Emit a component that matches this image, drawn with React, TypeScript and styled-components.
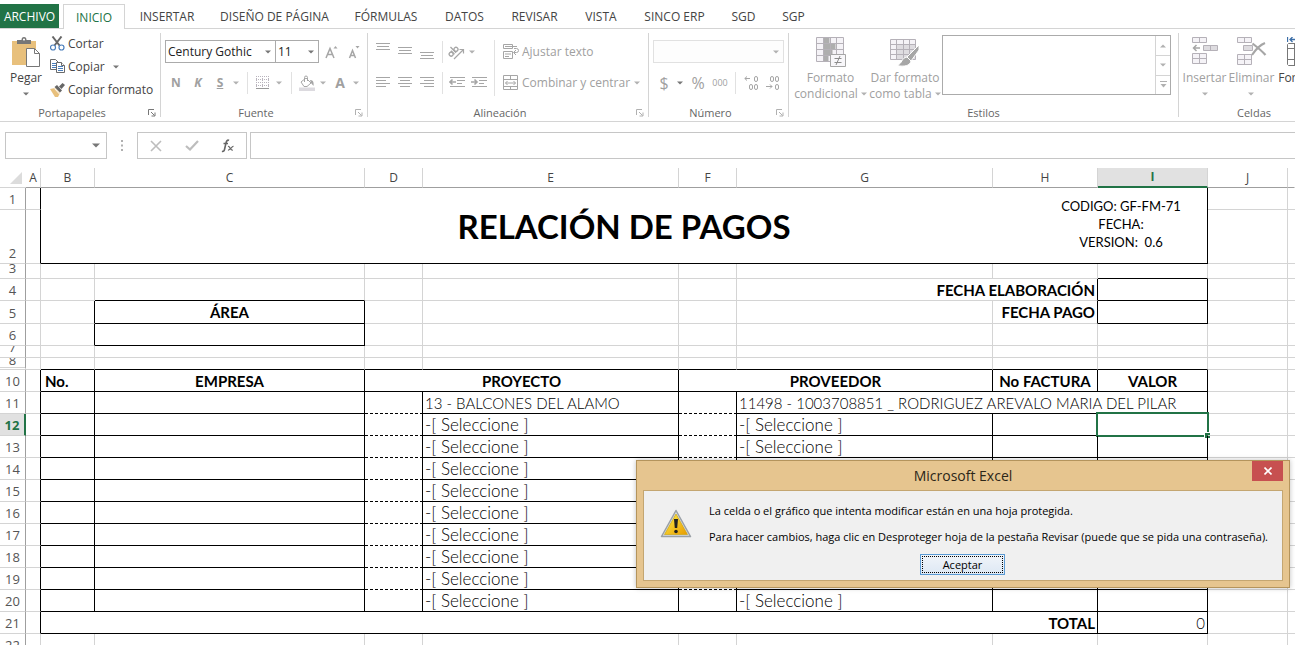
import React from "react";
import styled, { createGlobalStyle, css } from "styled-components";

const UI = `"Open Sans", "Noto Sans", sans-serif`;
const SHEET = `Lato, "Open Sans", sans-serif`;
const GREEN = "#217346";
const GRID = "#d4d4d4";

const GlobalStyle = createGlobalStyle`
  *, *::before, *::after { box-sizing: border-box; }
  html, body, #root { height: 100%; }
  body { margin: 0; background: #fff; overflow: hidden; font-family: ${UI}; font-size: 12px; color: #444; }
  button, input, select { font: inherit; color: inherit; margin: 0; padding: 0; border: 0; background: none; border-radius: 0; }
  svg { display: block; flex: none; }
`;

const AppWindow = styled.div`
  position: relative;
  display: flex;
  flex-direction: column;
  height: 100%;
  overflow: hidden;
`;

/* ---------- Tabs ---------- */

const Tabs = styled.nav`
  display: flex;
  align-items: flex-end;
  height: 29px;
  padding-top: 4px;
  border-bottom: 1px solid ${GRID};
  flex: none;
`;

const Tab = styled.button<{ $w: number; $kind?: "file" | "active" }>`
  width: ${(p) => p.$w}px;
  height: 24px;
  flex: none;
  white-space: nowrap;
  text-align: center;
  ${(p) =>
    p.$kind === "file" &&
    css`
      background: ${GREEN};
      color: #fff;
      margin-right: 4px;
    `}
  ${(p) =>
    p.$kind === "active" &&
    css`
      height: 25px;
      margin-bottom: -1px;
      border: 1px solid ${GRID};
      border-bottom: 0;
      background: #fff;
      color: ${GREEN};
    `}
`;

/* ---------- Ribbon ---------- */

const Ribbon = styled.div`
  display: flex;
  height: 93px;
  border-bottom: 1px solid ${GRID};
  flex: none;
`;

const Group = styled.section<{ $w: number }>`
  width: ${(p) => p.$w}px;
  flex: none;
  display: flex;
  flex-direction: column;
  justify-content: space-between;
`;

const GroupLine = styled.div`
  width: 1px;
  margin: 4px 0;
  background: ${GRID};
  flex: none;
`;

const GroupFooter = styled.div`
  display: flex;
  align-items: center;
  height: 17px;
  line-height: 17px;
  font-size: 11px;
  color: #666;
`;

const GroupLabel = styled.span`
  flex: 1;
  text-align: center;
`;

const Launcher = styled.button<{ $dim?: boolean }>`
  width: 16px;
  padding-left: 4px;
  color: ${(p) => (p.$dim ? "#b1b1b1" : "#777")};
`;

const Tools = styled.div`
  display: flex;
  flex-direction: column;
  gap: 8px;
  padding: 11px 4px 0;
`;

const SplitTools = styled.div`
  display: flex;
`;

const ToolRow = styled.div`
  display: flex;
  align-items: center;
  height: 23px;
`;

const ToolButton = styled.button<{ $w: number }>`
  width: ${(p) => p.$w}px;
  height: 22px;
  display: flex;
  align-items: center;
  justify-content: center;
  flex: none;
  color: #a0a0a0;
`;

const Glyph = styled.span<{ $size?: number; $bold?: boolean; $italic?: boolean; $under?: boolean }>`
  font-size: ${(p) => p.$size ?? 12}px;
  line-height: 20px;
  font-weight: ${(p) => (p.$bold ? 700 : 400)};
  font-style: ${(p) => (p.$italic ? "italic" : "normal")};
  text-decoration: ${(p) => (p.$under ? "underline" : "none")};
`;

const Divider = styled.div<{ $w?: number; $tall?: boolean }>`
  width: ${(p) => p.$w ?? 12}px;
  height: ${(p) => (p.$tall ? 56 : 22)}px;
  display: flex;
  justify-content: center;
  flex: none;
  &::before {
    content: "";
    width: 1px;
    background: #e1e1e1;
  }
`;

const TextTool = styled.button<{ $dim?: boolean }>`
  display: flex;
  align-items: center;
  gap: 3px;
  height: 23px;
  white-space: nowrap;
  color: ${(p) => (p.$dim ? "#a0a0a0" : "#444")};
`;

const ToolColumn = styled.div<{ $gap?: number; $left?: number }>`
  display: flex;
  flex-direction: column;
  gap: ${(p) => p.$gap ?? 0}px;
  padding-left: ${(p) => p.$left ?? 0}px;
`;

const BigTools = styled.div<{ $top?: number; $left?: number }>`
  display: flex;
  align-items: flex-start;
  padding: ${(p) => p.$top ?? 8}px 0 0 ${(p) => p.$left ?? 0}px;
`;

const BigTool = styled.button<{ $w: number; $dim?: boolean }>`
  width: ${(p) => p.$w}px;
  flex: none;
  display: flex;
  flex-direction: column;
  align-items: center;
  gap: 3px;
  line-height: 16px;
  white-space: nowrap;
  color: ${(p) => (p.$dim ? "#a0a0a0" : "#444")};
`;

const BigLine = styled.span`
  display: flex;
  align-items: center;
  justify-content: center;
  gap: 3px;
  min-height: 16px;
`;

const Stack = styled.span`
  display: block;
`;

const SelectWrap = styled.label<{ $w: number; $dim?: boolean }>`
  width: ${(p) => p.$w}px;
  height: 23px;
  display: grid;
  grid-template-columns: 1fr 14px;
  align-items: center;
  flex: none;
  border: 1px solid ${(p) => (p.$dim ? "#e1e1e1" : "#ababab")};
  background: ${(p) => (p.$dim ? "#fdfdfd" : "#fff")};
  color: #777;
  & + & { margin-left: -1px; }
  select {
    grid-area: 1 / 1 / 2 / 3;
    width: 100%;
    height: 21px;
    padding-left: 2px;
    appearance: none;
    color: #222;
    opacity: 1;
  }
  svg { grid-area: 1 / 2; justify-self: center; pointer-events: none; }
`;

const Gallery = styled.div`
  display: grid;
  grid-template-columns: 1fr 15px;
  width: 229px;
  height: 60px;
  margin-top: -2px;
  border: 1px solid #ababab;
`;

const GalleryScroll = styled.div`
  display: grid;
  grid-template-rows: repeat(3, 1fr);
  border-left: 1px solid ${GRID};
  color: #b1b1b1;
  button {
    display: flex;
    align-items: center;
    justify-content: center;
  }
  button + button { border-top: 1px solid ${GRID}; }
`;

/* ---------- Formula bar ---------- */

const FormulaBar = styled.div`
  display: flex;
  height: 46px;
  padding: 10px 0 9px 5px;
  flex: none;
`;

const BarBox = styled.div<{ $w?: number }>`
  display: flex;
  align-items: center;
  border: 1px solid #c6c6c6;
  ${(p) => (p.$w ? `width: ${p.$w}px; flex: none;` : "flex: 1; border-right: 0;")}
  input { flex: 1; min-width: 0; height: 100%; padding: 0 4px; outline: 0; }
`;

const BarButton = styled.button<{ $w: number }>`
  width: ${(p) => p.$w}px;
  height: 100%;
  display: flex;
  align-items: center;
  justify-content: center;
  color: #777;
`;

const BarGap = styled.div<{ $w: number }>`
  width: ${(p) => p.$w}px;
  display: flex;
  align-items: center;
  justify-content: center;
  flex: none;
`;

/* ---------- Sheet ---------- */

const Sheet = styled.table`
  width: 100%;
  min-width: 1288px;
  table-layout: fixed;
  border-collapse: separate;
  border-spacing: 0;
  th, td { padding: 0; }
`;

const ColHead = styled.th<{ $on?: boolean; $plain?: boolean }>`
  height: 20px;
  font-weight: ${(p) => (p.$on ? 700 : 400)};
  font-size: 12px;
  line-height: 18px;
  color: ${(p) => (p.$on ? GREEN : "#444")};
  background: ${(p) => (p.$on ? "#e1e1e1" : "#fff")};
  border-right: 1px solid ${(p) => (p.$plain ? "transparent" : GRID)};
  border-bottom: ${(p) => (p.$on ? `2px solid ${GREEN}` : "1px solid #9f9f9f")};
`;

const Corner = styled.th`
  border-bottom: 1px solid ${GRID};
  svg { margin-left: 10px; }
`;

const RowHead = styled.th<{ $h: number; $on?: boolean; $double?: boolean }>`
  height: ${(p) => p.$h}px;
  font-weight: ${(p) => (p.$on ? 700 : 400)};
  font-size: 13px;
  color: ${(p) => (p.$on ? GREEN : "#555")};
  background: ${(p) => (p.$on ? "#e1e1e1" : "#fff")};
  border-right: ${(p) => (p.$on ? `2px solid ${GREEN}` : "1px solid #9f9f9f")};
  border-bottom: ${(p) => (p.$double ? "3px double" : "1px solid")} ${GRID};
  > span {
    display: flex;
    align-items: flex-end;
    justify-content: center;
    height: ${(p) => p.$h - (p.$double ? 3 : 1)}px;
    line-height: ${(p) => (p.$double ? 14 : 19)}px;
    overflow: hidden;
  }
`;

type Edge = "grid" | "ink" | "dash" | "none";
const edge = (e: Edge) =>
  e === "ink" ? "1px solid #000" : e === "dash" ? "1px dashed #000" : e === "none" ? "0" : `1px solid ${GRID}`;

const Cell = styled.td<{ $r?: Edge; $b?: Edge; $align?: string; $bold?: boolean; $pad?: number; $size?: number }>`
  position: relative;
  border-right: ${(p) => edge(p.$r ?? "grid")};
  border-bottom: ${(p) => edge(p.$b ?? "grid")};
  && { padding: 0 ${(p) => p.$pad ?? 2}px; }
  font-family: ${SHEET};
  font-size: ${(p) => p.$size ?? 15}px;
  font-weight: ${(p) => (p.$bold ? 700 : 300)};
  line-height: 18px;
  text-align: ${(p) => p.$align ?? "left"};
  white-space: nowrap;
  color: #000;
`;

const SheetTitle = styled.div`
  font-size: 33px;
  font-weight: 700;
  line-height: 40px;
  text-align: center;
`;

const CodeBox = styled.div`
  position: absolute;
  top: 9px;
  right: 24px;
  width: 124px;
  font-size: 13px;
  font-weight: 400;
  line-height: 18px;
  text-align: center;
  white-space: pre;
`;

const Selection = styled.div`
  position: absolute;
  inset: -2px;
  border: 2px solid ${GREEN};
  &::after {
    content: "";
    position: absolute;
    right: -3px;
    bottom: -3px;
    width: 6px;
    height: 6px;
    background: ${GREEN};
    border: 1px solid #fff;
    border-width: 1px 0 0 1px;
  }
`;

/* ---------- Dialog ---------- */

const Dialog = styled.div`
  position: absolute;
  left: 636px;
  top: 460px;
  width: 654px;
  padding: 0 6px 6px;
  border: 1px solid #b4945c;
  background: #e6c58f;
  color: #000;
  box-shadow: 0 0 5px rgba(0, 0, 0, 0.25);
`;

const DialogBar = styled.div`
  display: grid;
  grid-template-columns: 31px 1fr 31px;
  height: 29px;
`;

const DialogTitle = styled.h2`
  margin: 0;
  font-size: 14px;
  font-weight: 400;
  line-height: 30px;
  text-align: center;
  color: #2c2618;
`;

const CloseButton = styled.button`
  height: 20px;
  display: flex;
  align-items: center;
  justify-content: center;
  background: #c75050;
  color: #fff;
`;

const DialogBody = styled.div`
  display: flex;
  flex-direction: column;
  border: 1px solid #c4a671;
  background: #f0f0f0;
  height: 91px;
  padding: 10px 0 0 16px;
`;

const MessageRow = styled.div`
  display: flex;
  gap: 17px;
  font-size: 11px;
  svg { margin-top: 8px; }
`;

const Message = styled.div`
  p { margin: 0; line-height: 20px; white-space: nowrap; }
  p + p { margin-top: 6px; }
`;

const AcceptButton = styled.button`
  width: 85px;
  height: 21px;
  margin: 7px 0 0 260px;
  border: 1px solid #5b9bd5;
  background: linear-gradient(#f0f4f9, #dde8f4);
  font-size: 11px;
  line-height: 15px;
  outline: 1px dotted #000;
  outline-offset: -3px;
  color: #000;
`;

/* ---------- Icons ---------- */

const Arrow = ({ up, c = "currentColor" }: { up?: boolean; c?: string }) => (
  <svg width="6" height="4" viewBox="0 0 6 4">
    <path d={up ? "M0 3.5h6L3 .5z" : "M0 .5h6L3 3.5z"} fill={c} />
  </svg>
);

const LauncherIcon = () => (
  <svg width="8" height="8" viewBox="0 0 8 8" fill="none" stroke="currentColor">
    <path d="M.5 6V.5H6M3 3l3.5 3.5M7 3.5V7H3.5" />
  </svg>
);

const PasteIcon = () => (
  <svg width="28" height="30" viewBox="0 0 28 30">
    <path d="M0 4h24v24H0z" fill="#e8c07c" />
    <path d="M5 7V3h4.500a2.500 3 0 0 1 5 0H19v4z" fill="#777" />
    <path d="M12 1.500a1 1 0 1 1-.01 0" fill="#fff" />
    <path d="M14.500 11.500h8l5 5V29.500h-13z" fill="#fff" stroke="#777" />
    <path d="M22.500 11.500v5h5" fill="none" stroke="#777" />
  </svg>
);

const CutIcon = () => (
  <svg width="15" height="15" viewBox="0 0 15 15" fill="none">
    <path d="M2.500 .5l7 9M11.500 .5l-7 9" stroke="#666" strokeWidth="2" />
    <circle cx="3" cy="11.500" r="2.500" stroke="#4a7ebb" strokeWidth="1.200" />
    <circle cx="11.500" cy="11.500" r="2.500" stroke="#4a7ebb" strokeWidth="1.200" />
  </svg>
);

const CopyIcon = () => (
  <svg width="15" height="15" viewBox="0 0 15 15" stroke="#6a6a6a" fill="#fff">
    <path d="M.5 .5h5l3 3v7h-8z" />
    <path d="M2 4.500h4M2 6.500h4M2 8.500h4" stroke="#4a7ebb" />
    <path d="M6.500 3.500h5l3 3v7h-8z" />
    <path d="M11.500 3.500v3h3" />
    <path d="M8 7.500h5M8 9.500h5M8 11.500h5" stroke="#4a7ebb" />
  </svg>
);

const PainterIcon = () => (
  <svg width="15" height="14" viewBox="0 0 15 14">
    <path d="M0 6l5-1 5 5-2 4H5z" fill="#e8c07c" />
    <path d="M4.500 4L7 2l5 5.500-2 2z" fill="#666" />
    <path d="M9 3.500L12.500 0 15 2 11.500 6z" fill="#666" />
    <path d="M4.500 5.500l5 5.500" stroke="#fff" />
  </svg>
);

const FontSizeIcon = ({ big }: { big?: boolean }) => (
  <svg width="14" height="18" viewBox="0 0 14 18">
    <path
      d={big ? "M1 15L5 5.500 9 15M2.500 11.500h5" : "M2.500 15l3-7.500 3 7.500M3.500 12.500h4"}
      fill="none"
      stroke="#a6a6a6"
      strokeWidth="1.500"
    />
    <path d={big ? "M8.500 5.500h4L10.500 3z" : "M8.500 3h4l-2 2.500z"} fill="#a6a6a6" />
  </svg>
);

const BordersIcon = () => (
  <svg width="14" height="14" viewBox="0 0 14 14" fill="none" stroke="#b9b4bd">
    <path d="M0 .5h13M0 6.500h13M.5 0v12M6.500 0v12M12.500 0v12M0 3.500h13M0 9.500h13" strokeDasharray="1 1" />
    <path d="M0 12.500h13" stroke="#999" />
  </svg>
);

const FillIcon = () => (
  <svg width="16" height="16" viewBox="0 0 16 16">
    <path d="M2 7l5-4 5 5-4 3.500H5z" fill="#fff" stroke="#a6a6a6" />
    <path d="M5.500 7V2.500a1.500 1.500 0 0 1 3 0V6" fill="none" stroke="#a6a6a6" />
    <path d="M11 5c3 0 4 2 3.500 6L12 8z" fill="#a6a6a6" />
    <path d="M0 12.500h16V16H0z" fill="#dcdadf" />
  </svg>
);

const LinesIcon = ({ rows, dy = 0 }: { rows: [number, number][]; dy?: number }) => (
  <svg width="14" height="18" viewBox="0 0 14 18" stroke="#a6a6a6">
    {rows.map(([x1, x2], i) => (
      <path key={i} d={`M${x1} ${dy + i * 3 + 0.5}H${x2}`} />
    ))}
  </svg>
);

const OrientationIcon = () => (
  <svg width="17" height="16" viewBox="0 0 17 16" fill="none" stroke="#a6a6a6">
    <g transform="rotate(-45 6 8)" strokeWidth="1.300">
      <circle cx="2.500" cy="7.500" r="2" />
      <path d="M4.700 5v5M7 2v8" />
      <circle cx="9.300" cy="7.500" r="2" />
    </g>
    <path d="M6 15l9-9M11.500 5.500h4v4" strokeWidth="1.200" />
  </svg>
);

const IndentIcon = ({ out }: { out?: boolean }) => (
  <svg width="16" height="12" viewBox="0 0 16 12" stroke="#a6a6a6" fill="none">
    <path d="M1 .5h15M8 3.500h8M8 6.500h5M1 9.500h15" />
    <path d={out ? "M7 5H1M3.500 2.500L1 5l2.500 2.500" : "M0 5h6M3.500 2.500L6 5 3.500 7.500"} strokeWidth="1.600" />
  </svg>
);

const WrapIcon = () => (
  <svg width="16" height="16" viewBox="0 0 16 16" fill="none" stroke="#a6a6a6">
    <path d="M.5 .5h9v4h-9zM.5 7.500h9v7h-9zM2 2.500h12M2 10h6M2 12.500h4" />
    <path d="M11 4.500h2.500a2 2 0 0 1 0 4H11M13 6l-2.500 2.500L13 11" />
  </svg>
);

const MergeIcon = () => (
  <svg width="16" height="16" viewBox="0 0 16 16" fill="none" stroke="#a6a6a6">
    <path d="M.5 .5h14v14H.5zM.5 4.500h14M.5 11.500h14M7.500 .5v4M7.500 11.500v3M2.500 8h10M4.500 6l-2 2 2 2M10.500 6l2 2-2 2" />
  </svg>
);

const DecimalIcon = ({ add }: { add?: boolean }) => (
  <svg width="15" height="16" viewBox="0 0 15 16" fill="none" stroke="#a6a6a6">
    {add ? (
      <>
        <path d="M6 3.500H.8M3 1.500l-2.200 2L3 5.500" />
        <rect x="10.500" y="1.500" width="3" height="5" rx="1.500" />
        <rect x="5.500" y="9.500" width="3" height="5" rx="1.500" />
        <rect x="10.500" y="9.500" width="3" height="5" rx="1.500" />
      </>
    ) : (
      <>
        <rect x="5.500" y="1.500" width="3" height="5" rx="1.500" />
        <rect x="10.500" y="1.500" width="3" height="5" rx="1.500" />
        <rect x="10.500" y="9.500" width="3" height="5" rx="1.500" />
        <path d="M1 11.500h6M5 9.500l2 2-2 2" />
      </>
    )}
  </svg>
);

const ConditionalIcon = () => (
  <svg width="30" height="30" viewBox="0 0 30 30">
    <path d="M.5 .5h27v24H.5z" fill="#f5f3f7" />
    <path d="M7.500 .5h6v6h-6zM7.500 6.500h12v6h-12zM7.500 12.500h9v6h-9zM7.500 18.500h5v6h-5z" fill="#aeaeae" />
    <path d="M.5 .5h27v24H.5zM7.500 .5v24M14.500 .5v24M20.500 .5v24M.5 6.500h27M.5 12.500h27M.5 18.500h27" fill="none" stroke="#b5b1b8" />
    <path d="M14.500 17.500h15v12h-15z" fill="#f8f7fa" stroke="#a6a6a6" />
    <path d="M18.500 21.500h7M18.500 25.500h7M24 19l-4 9" stroke="#8c8c8c" />
  </svg>
);

const TableFormatIcon = () => (
  <svg width="30" height="30" viewBox="0 0 30 30">
    <path d="M.5 2.500h25v20H.5z" fill="#f5f3f7" />
    <path d="M7 8h18v14H7z" fill="#dedce0" />
    <path d="M.5 2.500h25v20H.5zM6.500 2.500v20M13.500 2.500v20M19.500 2.500v20M.5 7.500h25M.5 12.500h25M.5 17.500h25" fill="none" stroke="#b5b1b8" />
    <path d="M29 8L17 20l4 4 8-11z" fill="#a6a6a6" stroke="#fff" />
    <path d="M17 20c-6 1-4 6-10 8.500 7 1.500 13 .5 14-4.500z" fill="#a6a6a6" stroke="#fff" />
  </svg>
);

const InsertCellsIcon = () => (
  <svg width="28" height="30" viewBox="0 0 28 30" fill="#f5f3f7" stroke="#b5b1b8">
    <path d="M1.500 .5h14v5h-14zM8.500 .5v5M1.500 16.500h14v10h-14zM8.500 16.500v10M1.500 21.500h14" />
    <path d="M12.500 8.500h14v5h-14zM19.500 8.500v5" fill="#dedce0" />
    <path d="M9 11H3M5.500 8L2.500 11l3 3" fill="none" stroke="#a6a6a6" strokeWidth="1.500" />
  </svg>
);

const DeleteCellsIcon = () => (
  <svg width="30" height="30" viewBox="0 0 30 30" fill="#f5f3f7" stroke="#b5b1b8">
    <path d="M.5 .5h14v5H.5zM7.500 .5v5M.5 17.500h14v10H.5zM7.500 17.500v10M.5 22.500h14" />
    <path d="M6.500 8.500h9v5h-9z" fill="#dedce0" />
    <path d="M15.500 6.500C20 10 25 14 28.500 18M28 6c-5 2-9 6-13 12" fill="none" stroke="#a6a6a6" strokeWidth="2.200" />
  </svg>
);

const FormatCellsIcon = () => (
  <svg width="30" height="30" viewBox="0 0 30 30" fill="none" stroke="#777">
    <path d="M1.500 6.500h26v22h-26l-1-1v-20zM7.500 6.500v22M.5 11.500h27M.5 22.500h27" />
    <path d="M8 12h14v10H8z" fill="#4a7ebb" stroke="none" />
    <path d="M.5 0v5M10 2.500H3M5.500 0L3 2.500 5.500 5" stroke="#3d6fa8" strokeWidth="1.300" />
  </svg>
);

const WarningIcon = () => (
  <svg width="32" height="30" viewBox="0 0 32 30">
    <defs>
      <linearGradient id="warn" x1="0" y1="0" x2="1" y2="1">
        <stop offset="0" stopColor="#fff04a" />
        <stop offset="1" stopColor="#e89b00" />
      </linearGradient>
    </defs>
    <path d="M16 1.500L30.500 27.500h-29z" fill="#d9dde0" stroke="#9aa0a6" strokeWidth="1.500" strokeLinejoin="round" />
    <path d="M16 5L27.500 25.500h-23z" fill="url(#warn)" stroke="#c9a000" strokeWidth=".6" />
    <path d="M14 10h4l-.8 9h-2.400z" fill="#222" />
    <circle cx="16" cy="22.500" r="1.800" fill="#222" />
  </svg>
);

/* ---------- Data ---------- */

const TABS: [string, number][] = [
  ["INSERTAR", 84],
  ["DISEÑO DE PÁGINA", 131],
  ["FÓRMULAS", 92],
  ["DATOS", 65],
  ["REVISAR", 75],
  ["VISTA", 58],
  ["SINCO ERP", 89],
  ["SGD", 49],
  ["SGP", 51],
];

const COLS: [string, number][] = [
  ["A", 15],
  ["B", 54],
  ["C", 270],
  ["D", 58],
  ["E", 256],
  ["F", 58],
  ["G", 256],
  ["H", 105],
  ["I", 110],
  ["J", 80],
];

const PICK = "-[ Seleccione ]";
const ENTRY_ROWS = [12, 13, 14, 15, 16, 17, 18, 19, 20];

const Head = ({ n, h = 22, on, double }: { n: number; h?: number; on?: boolean; double?: boolean }) => (
  <RowHead scope="row" $h={h} $on={on} $double={double}>
    <span>{n}</span>
  </RowHead>
);

const Blank = ({ count }: { count: number }) => (
  <>
    {Array.from({ length: count }, (_, i) => (
      <Cell key={i} />
    ))}
  </>
);

const Tail = () => (
  <>
    <Cell />
    <Cell $r="none" />
  </>
);

const GroupFoot = ({ label, launcher, dim }: { label: string; launcher?: boolean; dim?: boolean }) => (
  <GroupFooter>
    <GroupLabel>{label}</GroupLabel>
    {launcher && (
      <Launcher $dim={dim} aria-label={`Opciones de ${label}`}>
        <LauncherIcon />
      </Launcher>
    )}
  </GroupFooter>
);

const Caret = ({ w, c = "#b1b1b1", label }: { w: number; c?: string; label: string }) => (
  <ToolButton $w={w} aria-label={label}>
    <Arrow c={c} />
  </ToolButton>
);

const RibbonBar = () => (
  <Ribbon>
    <Group $w={160}>
      <SplitTools>
        <BigTools $left={5}>
          <BigTool $w={42}>
            <PasteIcon />
            <Stack>
              <BigLine>Pegar</BigLine>
              <BigLine>
                <Arrow c="#777" />
              </BigLine>
            </Stack>
          </BigTool>
        </BigTools>
        <BigTools $top={3} $left={3}>
          <ToolColumn>
            <TextTool>
              <CutIcon />
              Cortar
            </TextTool>
            <TextTool>
              <CopyIcon />
              Copiar
              <ToolButton as="span" $w={16}>
                <Arrow c="#777" />
              </ToolButton>
            </TextTool>
            <TextTool>
              <PainterIcon />
              Copiar formato
            </TextTool>
          </ToolColumn>
        </BigTools>
      </SplitTools>
      <GroupFoot label="Portapapeles" launcher />
    </Group>
    <GroupLine />

    <Group $w={206}>
      <Tools>
        <ToolRow>
          <SelectWrap $w={111}>
            <select aria-label="Fuente">
              <option>Century Gothic</option>
            </select>
            <Arrow />
          </SelectWrap>
          <SelectWrap $w={44}>
            <select aria-label="Tamaño de fuente">
              <option>11</option>
            </select>
            <Arrow />
          </SelectWrap>
          <ToolButton $w={26} aria-label="Aumentar tamaño">
            <FontSizeIcon big />
          </ToolButton>
          <ToolButton $w={18} aria-label="Disminuir tamaño">
            <FontSizeIcon />
          </ToolButton>
        </ToolRow>
        <ToolRow>
          <ToolButton $w={22}>
            <Glyph $bold>N</Glyph>
          </ToolButton>
          <ToolButton $w={22}>
            <Glyph $bold $italic>
              K
            </Glyph>
          </ToolButton>
          <ToolButton $w={22}>
            <Glyph $bold $under>
              S
            </Glyph>
          </ToolButton>
          <Caret w={10} label="Subrayado" />
          <Divider />
          <ToolButton $w={20} aria-label="Bordes">
            <BordersIcon />
          </ToolButton>
          <Caret w={12} label="Más bordes" />
          <Divider />
          <ToolButton $w={20} aria-label="Relleno">
            <FillIcon />
          </ToolButton>
          <Caret w={12} label="Color de relleno" />
          <ToolButton $w={22}>
            <Glyph $bold $size={14}>
              A
            </Glyph>
          </ToolButton>
          <Caret w={10} label="Color de fuente" />
        </ToolRow>
      </Tools>
      <GroupFoot label="Fuente" launcher dim />
    </Group>
    <GroupLine />

    <Group $w={280}>
      <Tools>
        <SplitTools>
          <ToolColumn $gap={8}>
            <ToolRow>
              <ToolButton $w={22} aria-label="Alinear arriba">
                <LinesIcon rows={[[0, 14], [1, 13], [0, 14]]} />
              </ToolButton>
              <ToolButton $w={22} aria-label="Alinear en el medio">
                <LinesIcon rows={[[0, 14], [1, 13], [0, 14]]} dy={4} />
              </ToolButton>
              <ToolButton $w={22} aria-label="Alinear abajo">
                <LinesIcon rows={[[0, 14], [1, 13], [0, 14]]} dy={9} />
              </ToolButton>
              <Divider $w={8} />
              <ToolButton $w={20} aria-label="Orientación">
                <OrientationIcon />
              </ToolButton>
              <Caret w={12} label="Más orientaciones" />
            </ToolRow>
            <ToolRow>
              <ToolButton $w={22} aria-label="Alinear a la izquierda">
                <LinesIcon rows={[[0, 14], [0, 10], [0, 14], [0, 10]]} dy={3} />
              </ToolButton>
              <ToolButton $w={22} aria-label="Centrar">
                <LinesIcon rows={[[0, 14], [2, 12], [0, 14], [2, 12]]} dy={3} />
              </ToolButton>
              <ToolButton $w={22} aria-label="Alinear a la derecha">
                <LinesIcon rows={[[0, 14], [4, 14], [0, 14], [4, 14]]} dy={3} />
              </ToolButton>
              <Divider $w={8} />
              <ToolButton $w={22} aria-label="Disminuir sangría">
                <IndentIcon out />
              </ToolButton>
              <ToolButton $w={22} aria-label="Aumentar sangría">
                <IndentIcon />
              </ToolButton>
            </ToolRow>
          </ToolColumn>
          <Divider $w={8} $tall />
          <ToolColumn $gap={8} $left={5}>
            <TextTool $dim>
              <WrapIcon />
              Ajustar texto
            </TextTool>
            <TextTool $dim>
              <MergeIcon />
              Combinar y centrar
              <ToolButton as="span" $w={8}>
                <Arrow c="#b1b1b1" />
              </ToolButton>
            </TextTool>
          </ToolColumn>
        </SplitTools>
      </Tools>
      <GroupFoot label="Alineación" launcher dim />
    </Group>
    <GroupLine />

    <Group $w={139}>
      <Tools>
        <ToolRow>
          <SelectWrap $w={131} $dim>
            <select aria-label="Formato de número" disabled />
            <Arrow c="#b1b1b1" />
          </SelectWrap>
        </ToolRow>
        <ToolRow>
          <ToolButton $w={22}>
            <Glyph $size={16}>$</Glyph>
          </ToolButton>
          <Caret w={10} c="#777" label="Moneda" />
          <ToolButton $w={26}>
            <Glyph $size={16}>%</Glyph>
          </ToolButton>
          <ToolButton $w={18}>
            <Glyph $size={9}>000</Glyph>
          </ToolButton>
          <Divider />
          <ToolButton $w={20} aria-label="Aumentar decimales">
            <DecimalIcon add />
          </ToolButton>
          <ToolButton $w={22} aria-label="Disminuir decimales">
            <DecimalIcon />
          </ToolButton>
        </ToolRow>
      </Tools>
      <GroupFoot label="Número" launcher dim />
    </Group>
    <GroupLine />

    <Group $w={389}>
      <BigTools $left={4}>
        <BigTool $w={75} $dim>
          <ConditionalIcon />
          <Stack>
            <BigLine>Formato</BigLine>
            <BigLine>
              condicional <Arrow c="#b1b1b1" />
            </BigLine>
          </Stack>
        </BigTool>
        <BigTool $w={74} $dim>
          <TableFormatIcon />
          <Stack>
            <BigLine>Dar formato</BigLine>
            <BigLine>
              como tabla <Arrow c="#b1b1b1" />
            </BigLine>
          </Stack>
        </BigTool>
        <Gallery>
          <div />
          <GalleryScroll>
            <button aria-label="Subir">
              <Arrow up />
            </button>
            <button aria-label="Bajar">
              <Arrow />
            </button>
            <button aria-label="Más estilos">
              <svg width="7" height="7" viewBox="0 0 7 7">
                <path d="M0 .5h7" stroke="currentColor" />
                <path d="M.5 3h6l-3 3.500z" fill="currentColor" />
              </svg>
            </button>
          </GalleryScroll>
        </Gallery>
      </BigTools>
      <GroupFoot label="Estilos" />
    </Group>
    <GroupLine />

    <Group $w={150}>
      <BigTools $left={4}>
        <BigTool $w={43} $dim>
          <InsertCellsIcon />
          <Stack>
            <BigLine>Insertar</BigLine>
            <BigLine>
              <Arrow c="#b1b1b1" />
            </BigLine>
          </Stack>
        </BigTool>
        <BigTool $w={51} $dim>
          <DeleteCellsIcon />
          <Stack>
            <BigLine>Eliminar</BigLine>
            <BigLine>
              <Arrow c="#b1b1b1" />
            </BigLine>
          </Stack>
        </BigTool>
        <BigTool $w={50}>
          <FormatCellsIcon />
          <Stack>
            <BigLine>Formato</BigLine>
            <BigLine>
              <Arrow />
            </BigLine>
          </Stack>
        </BigTool>
      </BigTools>
      <GroupFoot label="Celdas" />
    </Group>
  </Ribbon>
);

const SheetGrid = () => (
  <Sheet>
    <colgroup>
      <col width={26} />
      {COLS.map(([name, w]) => (
        <col key={name} width={w} />
      ))}
      <col />
    </colgroup>
    <thead>
      <tr>
        <Corner aria-label="Seleccionar todo">
          <svg width="12" height="12" viewBox="0 0 12 12">
            <path d="M12 0v12H0z" fill="#dcdcdc" />
          </svg>
        </Corner>
        {COLS.map(([name]) => (
          <ColHead key={name} scope="col" $on={name === "I"}>
            {name}
          </ColHead>
        ))}
        <ColHead $plain />
      </tr>
    </thead>
    <tbody>
      <tr>
        <Head n={1} />
        <Cell $r="ink" />
        <Cell colSpan={8} rowSpan={2} $r="ink" $b="ink">
          <SheetTitle>RELACIÓN DE PAGOS</SheetTitle>
          <CodeBox>{"CODIGO: GF-FM-71\nFECHA:\nVERSION:  0.6"}</CodeBox>
        </Cell>
        <Tail />
      </tr>
      <tr>
        <Head n={2} h={54} />
        <Cell $r="ink" />
        <Tail />
      </tr>
      <tr>
        <Head n={3} h={15} />
        <Blank count={8} />
        <Cell $b="ink" />
        <Tail />
      </tr>
      <tr>
        <Head n={4} />
        <Blank count={2} />
        <Cell $b="ink" />
        <Blank count={3} />
        <Cell colSpan={2} $r="ink" $align="right" $bold>
          FECHA ELABORACIÓN
        </Cell>
        <Cell $r="ink" $b="ink" />
        <Tail />
      </tr>
      <tr>
        <Head n={5} h={23} />
        <Cell />
        <Cell $r="ink" />
        <Cell $r="ink" $b="ink" $align="center" $bold>
          ÁREA
        </Cell>
        <Blank count={4} />
        <Cell $r="ink" $align="right" $bold>
          FECHA PAGO
        </Cell>
        <Cell $r="ink" $b="ink" />
        <Tail />
      </tr>
      <tr>
        <Head n={6} />
        <Cell />
        <Cell $r="ink" />
        <Cell $r="ink" $b="ink" />
        <Blank count={6} />
        <Tail />
      </tr>
      <tr>
        <Head n={7} h={12} />
        <Blank count={9} />
        <Tail />
      </tr>
      <tr>
        <Head n={8} h={12} double />
        <Cell />
        {COLS.slice(1, 9).map(([name]) => (
          <Cell key={name} $b="ink" />
        ))}
        <Tail />
      </tr>
      <tr>
        <Head n={10} />
        <Cell $r="ink" />
        <Cell $r="ink" $b="ink" $bold $pad={4}>
          No.
        </Cell>
        <Cell $r="ink" $b="ink" $align="center" $bold>
          EMPRESA
        </Cell>
        <Cell colSpan={2} $r="ink" $b="ink" $align="center" $bold>
          PROYECTO
        </Cell>
        <Cell colSpan={2} $r="ink" $b="ink" $align="center" $bold>
          PROVEEDOR
        </Cell>
        <Cell $r="ink" $b="ink" $align="center" $bold>
          No FACTURA
        </Cell>
        <Cell $r="ink" $b="ink" $align="center" $bold>
          VALOR
        </Cell>
        <Tail />
      </tr>
      <tr>
        <Head n={11} />
        <Cell $r="ink" />
        <Cell $r="ink" $b="ink" />
        <Cell $r="ink" $b="ink" />
        <Cell $r="ink" $b="dash" />
        <Cell $r="ink" $b="ink">
          13 - BALCONES DEL ALAMO
        </Cell>
        <Cell $r="ink" $b="dash" />
        <Cell colSpan={3} $r="ink" $b="ink">
          11498 - 1003708851 _ RODRIGUEZ AREVALO MARIA DEL PILAR
        </Cell>
        <Tail />
      </tr>
      {ENTRY_ROWS.map((n) => (
        <tr key={n}>
          <Head n={n} on={n === 12} />
          <Cell $r="ink" />
          <Cell $r="ink" $b="ink" />
          <Cell $r="ink" $b="ink" />
          <Cell $r="ink" $b={n === 20 ? "ink" : "dash"} />
          <Cell $r="ink" $b="ink" $size={17}>
            {PICK}
          </Cell>
          <Cell $r="ink" $b={n === 20 ? "ink" : "dash"} />
          <Cell $r="ink" $b="ink" $size={17}>
            {PICK}
          </Cell>
          <Cell $r="ink" $b="ink" />
          <Cell $r="ink" $b="ink">
            {n === 12 && <Selection />}
          </Cell>
          <Tail />
        </tr>
      ))}
      <tr>
        <Head n={21} />
        <Cell $r="ink" />
        <Cell colSpan={7} $r="ink" $b="ink" $align="right" $bold>
          TOTAL
        </Cell>
        <Cell $r="ink" $b="ink" $align="right">
          0
        </Cell>
        <Tail />
      </tr>
      <tr>
        <Head n={22} />
        <Blank count={9} />
        <Tail />
      </tr>
    </tbody>
  </Sheet>
);

export default function App() {
  return (
    <AppWindow>
      <GlobalStyle />
      <Tabs>
        <Tab $w={59} $kind="file">
          ARCHIVO
        </Tab>
        <Tab $w={62} $kind="active">
          INICIO
        </Tab>
        {TABS.map(([name, w]) => (
          <Tab key={name} $w={w}>
            {name}
          </Tab>
        ))}
      </Tabs>
      <RibbonBar />
      <FormulaBar>
        <BarBox $w={102}>
          <input aria-label="Cuadro de nombres" />
          <BarButton $w={20} aria-label="Nombres definidos">
            <svg width="8" height="5" viewBox="0 0 8 5">
              <path d="M0 .5h8l-4 4z" fill="#777" />
            </svg>
          </BarButton>
        </BarBox>
        <BarGap $w={30}>
          <svg width="2" height="11" viewBox="0 0 2 11">
            <path d="M0 0h2v2H0zM0 4.500h2v2H0zM0 9h2v2H0z" fill="#b0b0b0" />
          </svg>
        </BarGap>
        <BarBox $w={110}>
          <BarButton $w={36} aria-label="Cancelar">
            <svg width="12" height="12" viewBox="0 0 12 12" fill="none" stroke="#bdbdbd" strokeWidth="1.600">
              <path d="M1 1l10 10M11 1L1 11" />
            </svg>
          </BarButton>
          <BarButton $w={36} aria-label="Introducir">
            <svg width="14" height="11" viewBox="0 0 14 11" fill="none" stroke="#bdbdbd" strokeWidth="2.200">
              <path d="M1 6l4 3.500L13 1" />
            </svg>
          </BarButton>
          <BarButton $w={36} aria-label="Insertar función">
            <svg width="14" height="14" viewBox="0 0 14 14" fill="none" stroke="#666">
              <path d="M8 1.500C6.500 .5 5.500 2 5 4L3.500 10.500C3.200 12 2.300 12.800 1 12.200M2.500 4.500h4.500" strokeWidth="1.600" />
              <path d="M7 7.500c2-1 2 4.500 4.800 3.500M12.500 7.500c-1.500-.5-3.500 4-5.500 3.500" strokeWidth="1.300" />
            </svg>
          </BarButton>
        </BarBox>
        <BarGap $w={3} />
        <BarBox>
          <input aria-label="Barra de fórmulas" />
        </BarBox>
      </FormulaBar>
      <SheetGrid />
      <Dialog role="dialog" aria-labelledby="dialog-title">
        <DialogBar>
          <span />
          <DialogTitle id="dialog-title">Microsoft Excel</DialogTitle>
          <CloseButton aria-label="Cerrar">
            <svg width="8" height="8" viewBox="0 0 8 8" fill="none" stroke="currentColor" strokeWidth="1.600">
              <path d="M.5 .5l7 7M7.500 .5l-7 7" />
            </svg>
          </CloseButton>
        </DialogBar>
        <DialogBody>
          <MessageRow>
            <WarningIcon />
            <Message>
              <p>La celda o el gráfico que intenta modificar están en una hoja protegida.</p>
              <p>Para hacer cambios, haga clic en Desproteger hoja de la pestaña Revisar (puede que se pida una contraseña).</p>
            </Message>
          </MessageRow>
          <AcceptButton>Aceptar</AcceptButton>
        </DialogBody>
      </Dialog>
    </AppWindow>
  );
}
